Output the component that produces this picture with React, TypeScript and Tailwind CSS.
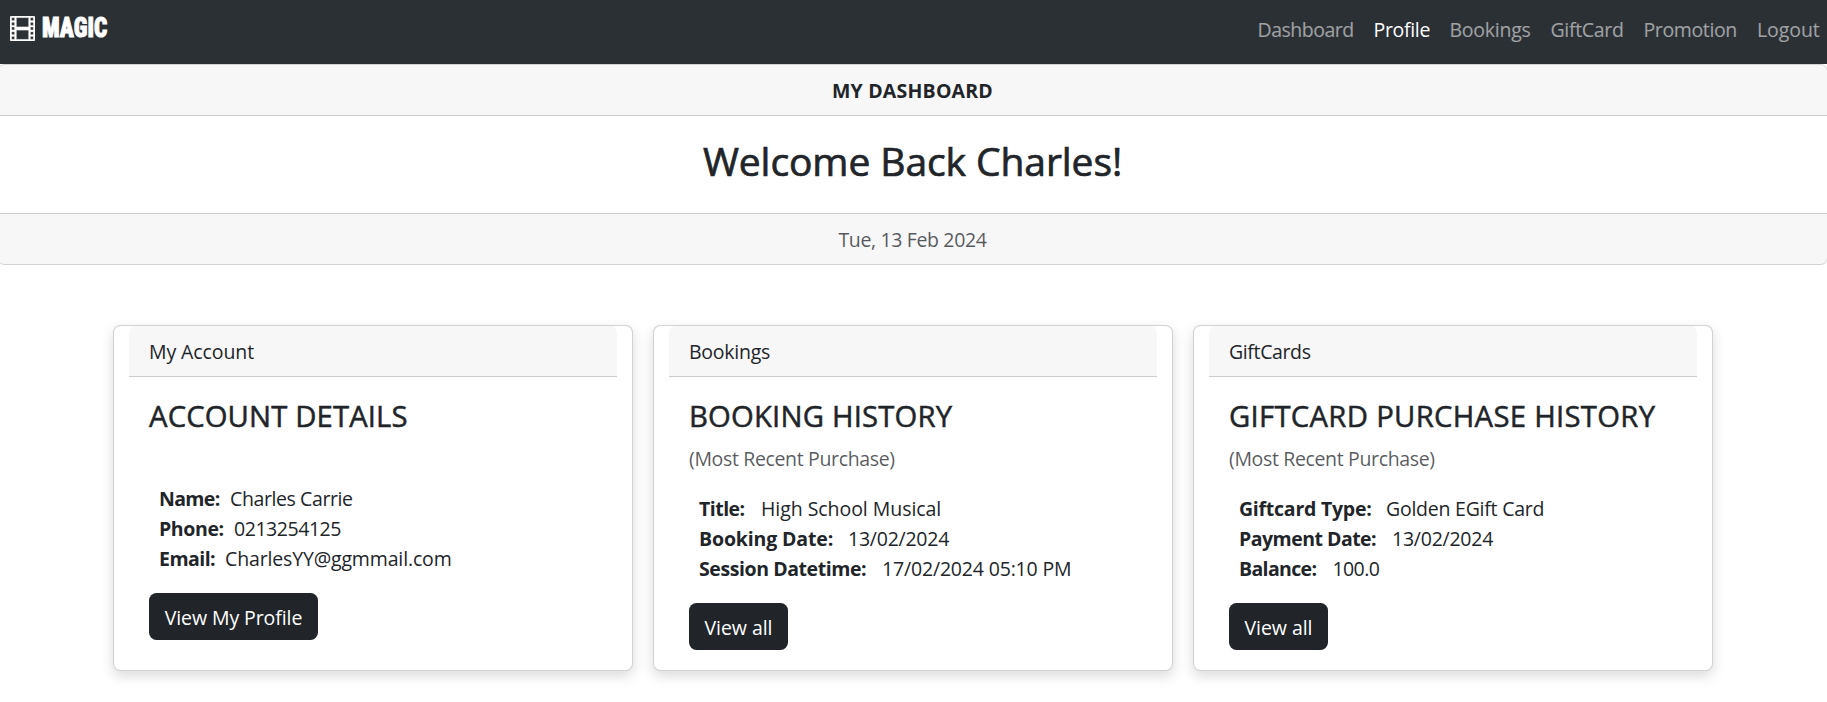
import { BsFilm } from "react-icons/bs";

type Row = {
  label: string;
  value: string;
  labelClass: string;
  valueClass: string;
};

type Panel = {
  header: string;
  headerClass: string;
  title: string;
  titleClass: string;
  subtitle?: string;
  rows: Row[];
  action: string;
  actionClass: string;
};

const links = [
  { name: "Dashboard", style: "w-[96px] tracking-[-0.5px]" },
  { name: "Profile", style: "w-[56px] tracking-[-0.31px]", active: true },
  { name: "Bookings", style: "w-[81px] tracking-[-0.24px]" },
  { name: "GiftCard", style: "w-[73px] tracking-[-0.31px]" },
  { name: "Promotion", style: "w-[93.5px] tracking-[-0.38px]" },
  { name: "Logout", style: "w-[62px] tracking-[-0.08px]" },
];

const panels: Panel[] = [
  {
    header: "My Account",
    headerClass: "tracking-[-0.09px]",
    title: "ACCOUNT DETAILS",
    titleClass: "tracking-[0.13px]",
    rows: [
      { label: "Name:", value: "Charles Carrie", labelClass: "w-[71px] tracking-[-0.65px]", valueClass: "tracking-[-0.4px]" },
      { label: "Phone:", value: "0213254125", labelClass: "w-[75px] tracking-[-0.39px]", valueClass: "tracking-[-0.45px]" },
      { label: "Email:", value: "CharlesYY@ggmmail.com", labelClass: "w-[66px] tracking-[-0.53px]", valueClass: "tracking-[-0.15px]" },
    ],
    action: "View My Profile",
    actionClass: "w-[169px] tracking-[-0.08px]",
  },
  {
    header: "Bookings",
    headerClass: "tracking-[-0.25px]",
    title: "BOOKING HISTORY",
    titleClass: "tracking-[0.19px]",
    subtitle: "(Most Recent Purchase)",
    rows: [
      { label: "Title:", value: "High School Musical", labelClass: "w-[62px] tracking-[-0.52px]", valueClass: "tracking-[-0.05px]" },
      { label: "Booking Date:", value: "13/02/2024", labelClass: "w-[149px] tracking-[-0.14px]", valueClass: "tracking-[-0.24px]" },
      { label: "Session Datetime:", value: "17/02/2024 05:10 PM", labelClass: "w-[183px] tracking-[-0.42px]", valueClass: "tracking-[-0.17px]" },
    ],
    action: "View all",
    actionClass: "w-[99px] tracking-[-0.05px]",
  },
  {
    header: "GiftCards",
    headerClass: "tracking-[-0.37px]",
    title: "GIFTCARD PURCHASE HISTORY",
    titleClass: "tracking-[0.3px]",
    subtitle: "(Most Recent Purchase)",
    rows: [
      { label: "Giftcard Type:", value: "Golden EGift Card", labelClass: "w-[147px] tracking-[-0.25px]", valueClass: "tracking-[-0.24px]" },
      { label: "Payment Date:", value: "13/02/2024", labelClass: "w-[153px] tracking-[-0.52px]", valueClass: "tracking-[-0.24px]" },
      { label: "Balance:", value: "100.0", labelClass: "w-[93.5px] tracking-[-0.64px]", valueClass: "tracking-[-0.6px]" },
    ],
    action: "View all",
    actionClass: "w-[99px] tracking-[-0.05px]",
  },
];

function Navbar() {
  return (
    <nav className="flex h-16 items-start justify-between bg-[#2b3035] pr-2 pl-2.5">
      <a className="flex items-start pt-[10px] text-white" href="#">
        <BsFilm className="mt-[6px] size-[25px] [stroke-width:0.35] stroke-white" />
        <span className="ml-[6.5px] inline-block origin-left scale-x-[0.83] font-[Roboto] text-[28px] leading-9 font-black [-webkit-text-stroke:1px_white] [font-stretch:75%]">
          MAGIC
        </span>
      </a>
      <ul className="flex gap-5 pt-[15px]">
        {links.map((l) => (
          <li key={l.name} className={l.style}>
            <a href="#" className={l.active ? "text-white" : "text-white/55"}>
              {l.name}
            </a>
          </li>
        ))}
      </ul>
    </nav>
  );
}

function Hero() {
  return (
    <section className="-mr-px -ml-[3px] rounded-[7.5px] border border-black/[0.175] text-center">
      <div className="rounded-t-[6.5px] border-b border-black/[0.175] bg-black/[0.03] pt-[11px] pb-[9px] font-bold tracking-[0.2px]">
        MY DASHBOARD
      </div>
      <h1 className="px-5 pt-[21px] pb-7 text-[39px] leading-[48px] font-medium tracking-[-0.08px] [-webkit-text-stroke:0.7px_#212529]">
        Welcome Back Charles!
      </h1>
      <div className="rounded-b-[6.5px] border-t border-black/[0.175] bg-black/[0.03] pt-[11px] pb-[9px] tracking-[-0.35px] text-[#212529]/75">
        Tue, 13 Feb 2024
      </div>
    </section>
  );
}

function Card({ panel }: { panel: Panel }) {
  return (
    <article className="h-[346px] w-[520px] rounded-[7.5px] border border-black/[0.175] bg-white px-[15px] shadow-[0_5px_13px_rgba(0,0,0,0.15)]">
      <header
        className={`rounded-t-[6.5px] border-b border-black/[0.175] bg-black/[0.03] px-5 pt-[11px] pb-[9px] ${panel.headerClass}`}
      >
        {panel.header}
      </header>
      <div className="px-5 pt-[21px]">
        <h2
          className={`text-[29.25px] leading-9 font-medium [-webkit-text-stroke:0.5px_#212529] ${panel.titleClass}`}
        >
          {panel.title}
        </h2>
        {panel.subtitle ? (
          <p className="mt-2.5 tracking-[-0.35px] text-[#212529]/75">{panel.subtitle}</p>
        ) : (
          <div className="h-[30px]" />
        )}
        <dl className="mt-5 mb-[19px] pl-2.5">
          {panel.rows.map((r) => (
            <div key={r.label} className="flex whitespace-nowrap">
              <dt className={`font-bold ${r.labelClass}`}>{r.label}</dt>
              <dd className={r.valueClass}>{r.value}</dd>
            </div>
          ))}
        </dl>
        <button
          className={`flex h-[47px] items-center justify-center rounded-[7.5px] bg-[#212529] pt-0.5 text-white ${panel.actionClass}`}
        >
          {panel.action}
        </button>
      </div>
    </article>
  );
}

export default function App() {
  return (
    <div className="h-[702px] overflow-hidden bg-white font-['Open_Sans',sans-serif] text-[19.5px] leading-[30px] text-[#212529]">
      <Navbar />
      <Hero />
      <main className="flex gap-5 pt-[60px] pl-[113px]">
        {panels.map((p) => (
          <Card key={p.header} panel={p} />
        ))}
      </main>
    </div>
  );
}
